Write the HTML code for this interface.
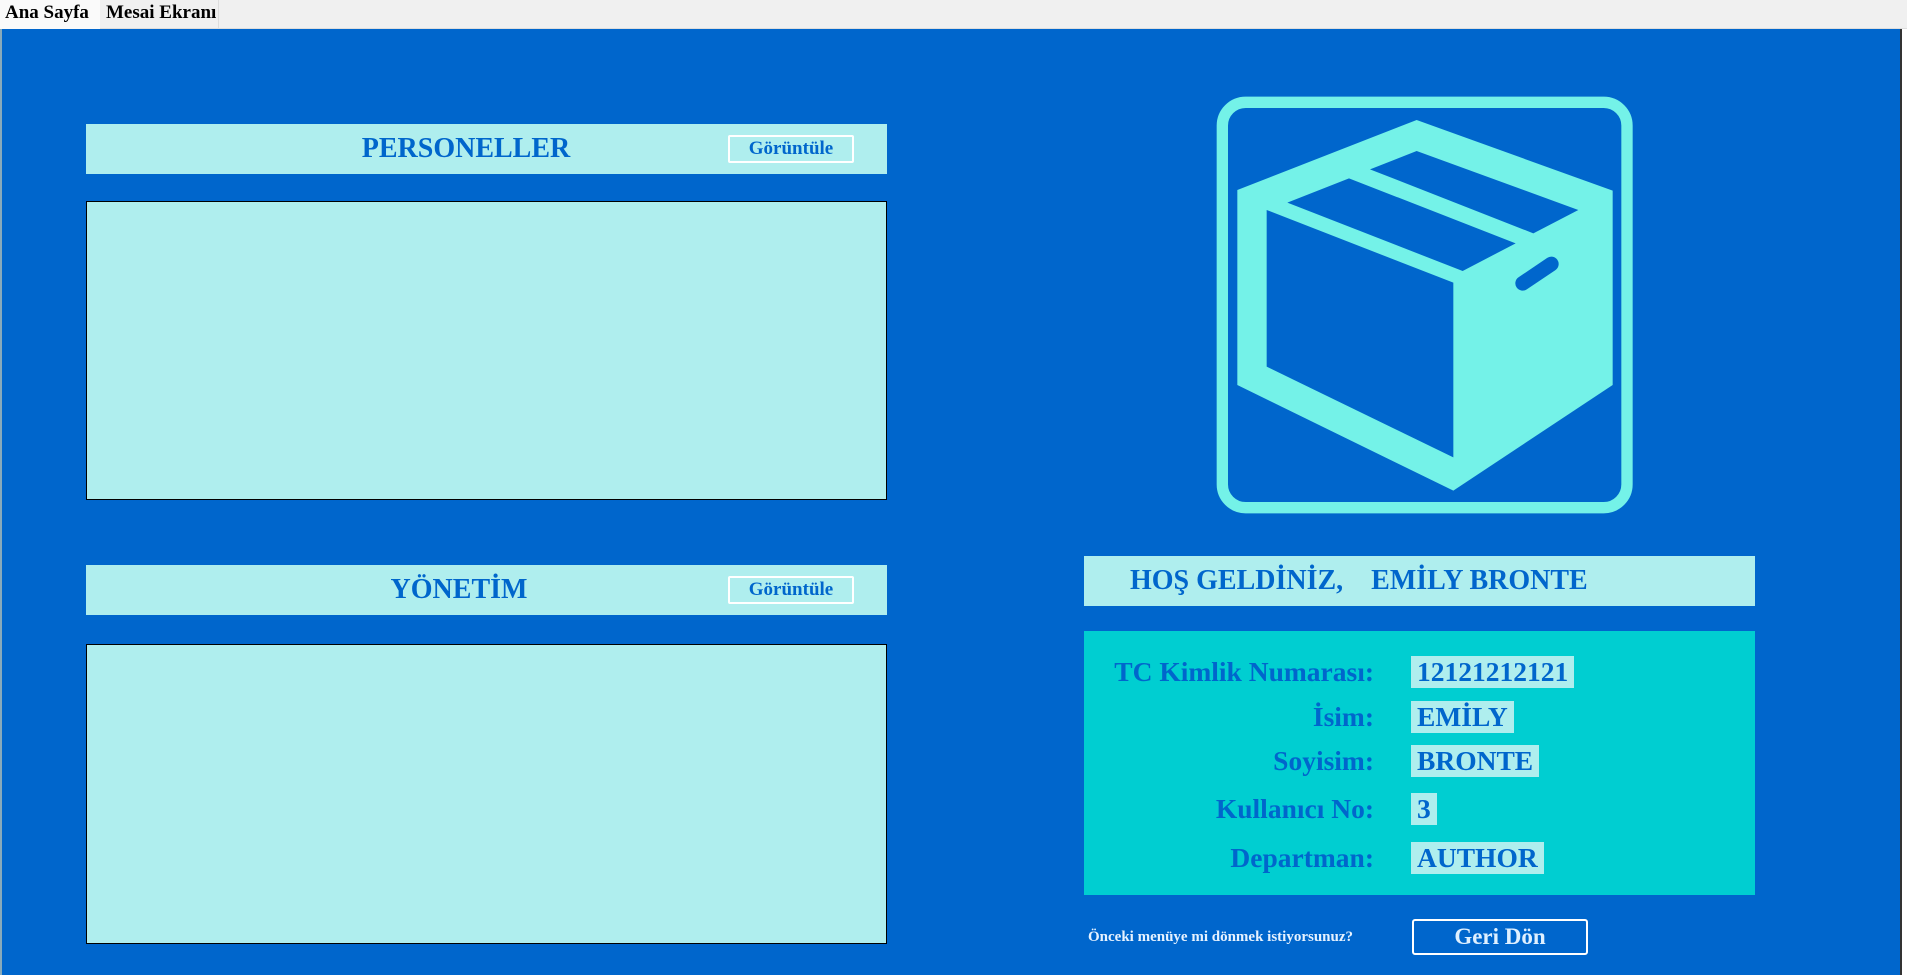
<!DOCTYPE html>
<html><head><meta charset="utf-8"><style>
*{margin:0;padding:0;box-sizing:border-box}
body{width:1907px;height:975px;overflow:hidden;background:#0066cc;font-family:"Liberation Serif",serif;font-weight:bold;position:relative}
.tabbar{position:absolute;left:0;top:0;width:1907px;height:29px;background:#f0f0f0;border-bottom:1px solid #ddd}
.tab{position:absolute;top:0;height:29px;font-size:19px;color:#000;line-height:26px;padding-left:6px}
.abs{position:absolute}
.bar{position:absolute;background:#afeeee;color:#0066cc;font-size:28px}
.btn{position:absolute;border:2px solid #fff;background:#afeeee;color:#0066cc;font-size:19px;text-align:center;line-height:24px;border-radius:2px}
.list{position:absolute;background:#afeeee;border:1px solid #000}
.lbl{position:absolute;right:533px;font-size:27.5px;color:#0066cc;text-align:right;white-space:nowrap;line-height:32px}
.val{position:absolute;left:1411px;height:32px;background:#afeeee;color:#0066cc;font-size:27.5px;line-height:32px;padding:0 6px;white-space:nowrap}
</style></head><body>
<div class="tabbar"></div>
<div class="tab" style="left:0;width:100px;background:#fafafa;padding-left:5px">Ana Sayfa</div>
<div class="tab" style="left:100px;width:119px;border-right:1px solid #ddd">Mesai Ekranı</div>
<div class="abs" style="left:0;top:29px;width:2px;height:946px;background:#8ab"></div>
<div class="abs" style="left:1900px;top:29px;width:7px;height:946px;background:#fff;border-left:2px solid #333"></div>

<div class="bar" style="left:86px;top:124px;width:801px;height:50px"><span class="abs" style="left:0;width:760px;text-align:center;top:9px">PERSONELLER</span></div>
<div class="btn" style="left:728px;top:135px;width:126px;height:28px">Görüntüle</div>
<div class="list" style="left:86px;top:201px;width:801px;height:299px"></div>

<div class="bar" style="left:86px;top:565px;width:801px;height:50px"><span class="abs" style="left:0;width:746px;text-align:center;top:9px">YÖNETİM</span></div>
<div class="btn" style="left:728px;top:576px;width:126px;height:28px">Görüntüle</div>
<div class="list" style="left:86px;top:644px;width:801px;height:300px"></div>

<svg class="abs" style="left:1180px;top:70px" width="480" height="460" viewBox="0 0 1440 1380">
<rect x="127" y="97" width="1214" height="1216" rx="70" fill="none" stroke="#74f2e8" stroke-width="34"/>
<polygon points="172,360 710,150 1298,362 1298,945 820,1262 172,945" fill="#74f2e8"/>
<polygon points="260,420 820,638 820,1162 260,890" fill="#0066cc"/>
<polygon points="322,398 507,325 1007,520 848,603" fill="#0066cc"/>
<polygon points="570,298 710,243 1195,420 1060,490" fill="#0066cc"/>
<line x1="1028" y1="640" x2="1114" y2="582" stroke="#0066cc" stroke-width="44" stroke-linecap="round"/>
</svg>

<div class="bar" style="left:1084px;top:556px;width:671px;height:50px"><span class="abs" style="left:46px;top:9px;white-space:nowrap">HOŞ GELDİNİZ,&nbsp;&nbsp;&nbsp; EMİLY BRONTE</span></div>

<div class="abs" style="left:1084px;top:631px;width:671px;height:264px;background:#00ced1"></div>
<div class="lbl" style="top:656px">TC Kimlik Numarası:</div>
<div class="val" style="top:656px">12121212121</div>
<div class="lbl" style="top:701px">İsim:</div>
<div class="val" style="top:701px">EMİLY</div>
<div class="lbl" style="top:745px">Soyisim:</div>
<div class="val" style="top:745px">BRONTE</div>
<div class="lbl" style="top:793px">Kullanıcı No:</div>
<div class="val" style="top:793px">3</div>
<div class="lbl" style="top:842px">Departman:</div>
<div class="val" style="top:842px">AUTHOR</div>

<div class="abs" style="left:1088px;top:929px;font-size:15px;color:#e6f2ff;white-space:nowrap">Önceki menüye mi dönmek istiyorsunuz?</div>
<div class="abs" style="left:1412px;top:919px;width:176px;height:36px;border:2px solid #fff;border-radius:3px;color:#dff0ff;font-size:23px;text-align:center;line-height:31px">Geri Dön</div>
</body></html>
